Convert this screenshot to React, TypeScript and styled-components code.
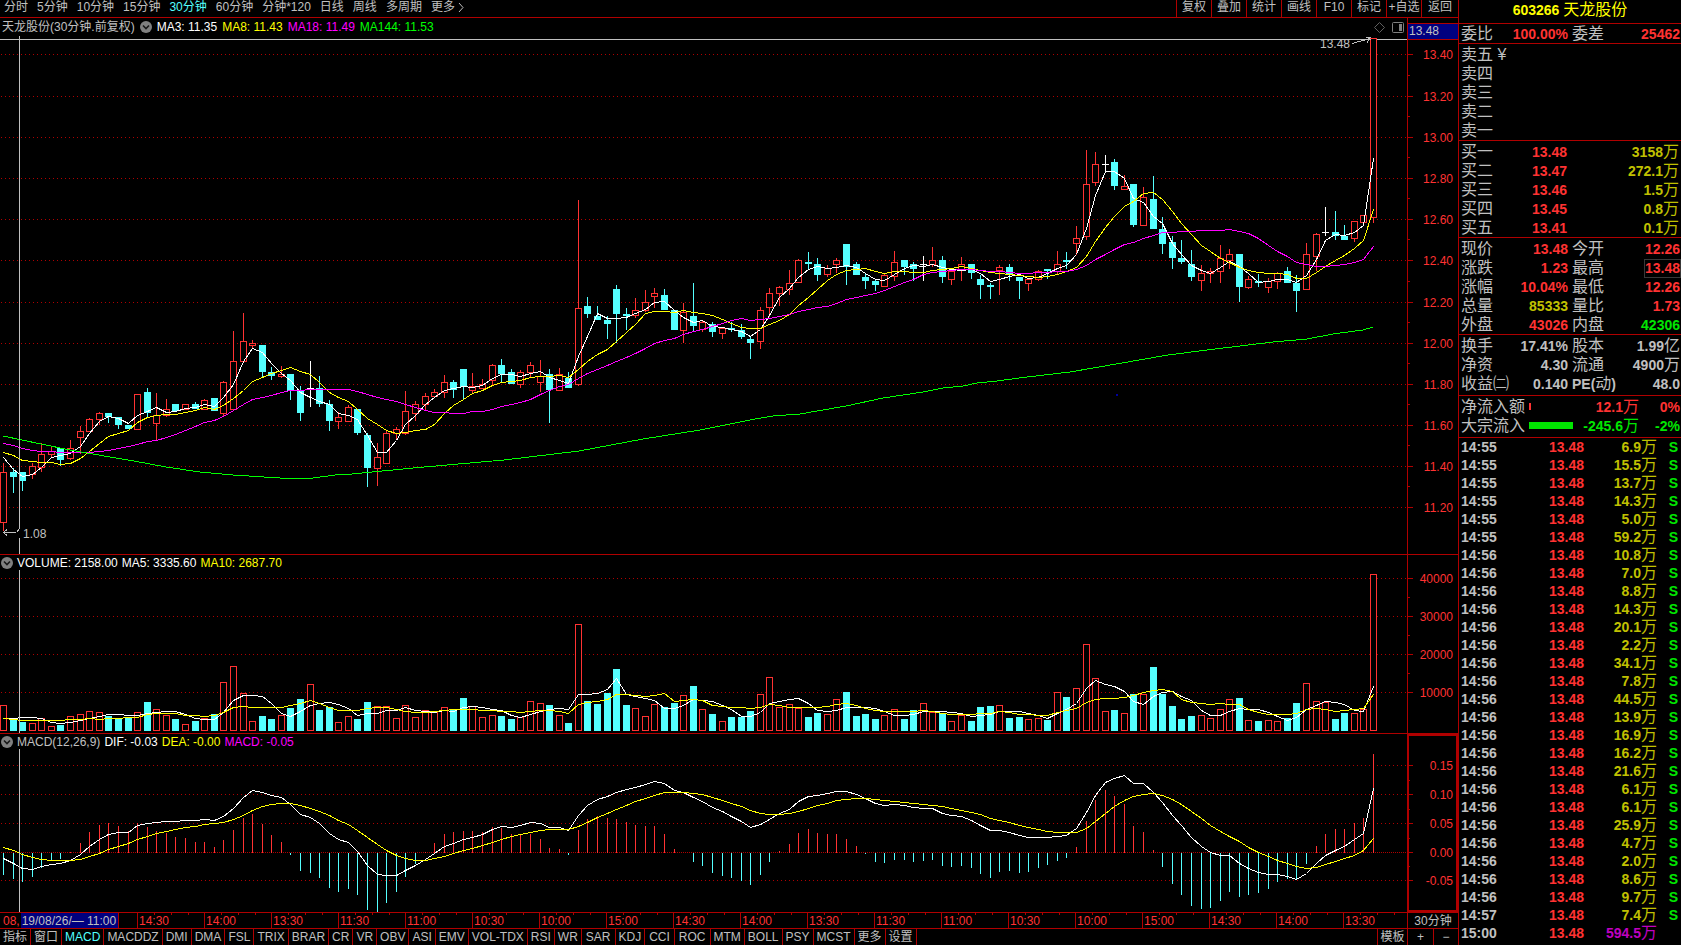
import React from "react";
import styled, { createGlobalStyle } from "styled-components";

const C = {
  line: "#b00000",
  red: "#ff3232",
  cyan: "#54ffff",
  grey: "#c0c0c0",
  white: "#ffffff",
  yellow: "#ffff00",
  dimYellow: "#c0c000",
  magenta: "#ff00ff",
  dimMagenta: "#c000c0",
  green: "#00e600",
  brightGreen: "#00ff00",
  navy: "#000080",
};

const Global = createGlobalStyle`
  * { box-sizing: border-box; }
  body {
    margin: 0;
    background: #000;
    color: ${C.grey};
    font: 12px/16px "Liberation Sans", "Noto Sans CJK SC", sans-serif;
    overflow: hidden;
  }
  button {
    font: inherit;
    color: inherit;
    background: none;
    border: 0;
    border-radius: 0;
    padding: 0;
    margin: 0;
    white-space: nowrap;
    cursor: pointer;
  }
  svg { display: block; }
`;

/* ---------- page frame ---------- */

const Page = styled.div`
  display: grid;
  grid-template-columns: minmax(0, 1fr) 222px;
  background: #000;
`;

const ChartColumn = styled.main`
  display: flex;
  flex-direction: column;
  min-width: 0;
  border-right: 1px solid ${C.line};
`;

/* ---------- top toolbar ---------- */

const Toolbar = styled.header`
  display: flex;
  justify-content: space-between;
  height: 18px;
  border-bottom: 1px solid ${C.line};
  line-height: 15px;
  overflow: hidden;
`;

const Periods = styled.nav`
  display: flex;
  gap: 9px;
  padding-left: 4px;
`;

const PeriodButton = styled.button<{ $active?: boolean }>`
  display: flex;
  align-items: center;
  gap: 2px;
  height: 15px;
  color: ${(p) => (p.$active ? C.cyan : C.grey)};
`;

const Tools = styled.div`
  display: flex;
`;

const ToolButton = styled.button`
  width: 35px;
  height: 17px;
  padding-bottom: 2px;
  line-height: 15px;
  border-left: 1px solid ${C.line};
  &:last-child { width: 37px; }
`;

/* ---------- chart panes ---------- */

const Pane = styled.section`
  display: grid;
  grid-template-columns: minmax(0, 1fr) 51px;
  border-bottom: 1px solid ${C.line};
`;

const Plot = styled.div`
  min-width: 0;
`;

const PaneHeader = styled.div<{ $main?: boolean }>`
  display: flex;
  align-items: center;
  gap: ${(p) => (p.$main ? 5 : 4)}px;
  height: ${(p) => (p.$main ? 18 : 15)}px;
  line-height: 16px;
  padding: 0 3px 0 ${(p) => (p.$main ? 2 : 1)}px;
  white-space: nowrap;
`;

const Legend = styled.span<{ $c: string }>`
  color: ${(p) => p.$c};
`;

const HeaderIcons = styled.span`
  display: flex;
  align-items: center;
  gap: 7px;
  margin-left: auto;
`;

const Canvas = styled.svg`
  width: 100%;
  shape-rendering: crispEdges;
`;

const Axis = styled.svg`
  shape-rendering: crispEdges;
  font-size: 12px;
`;

/* ---------- time axis and indicator tabs ---------- */

const TimeRow = styled.div`
  display: grid;
  grid-template-columns: minmax(0, 1fr) 51px;
  grid-template-rows: 15px;
  height: 16px;
  border-bottom: 1px solid ${C.line};
  line-height: 16px;
`;

const TimeScale = styled.div`
  display: grid;
  grid-template-columns: 137fr repeat(18, 67fr) 64fr;
  grid-template-rows: 15px;
  color: ${C.red};
  white-space: nowrap;
`;

const TimeCell = styled.div`
  min-width: 0;
  border-left: 1px solid ${C.line};
  padding-left: 1px;
  background: repeating-linear-gradient(90deg, transparent 0 16px, ${C.line} 16px 17px) 0 0 / 100% 2px no-repeat;
`;

const TimeLead = styled.div`
  display: flex;
  min-width: 0;
  padding-left: 3px;
`;

const CursorTime = styled.span`
  width: 98px;
  margin-left: 1px;
  padding-left: 1px;
  background: ${C.navy};
  color: ${C.grey};
  border-right: 1px solid ${C.line};
`;

const PeriodCell = styled.div`
  border-left: 1px solid ${C.line};
  text-align: center;
`;

const BottomBar = styled.footer`
  display: flex;
  justify-content: space-between;
  height: 16px;
  line-height: 16px;
`;

const Tabs = styled.nav`
  display: flex;
`;

const Tab = styled.button<{ $active?: boolean; $roomy?: boolean }>`
  height: 16px;
  padding: 0 ${(p) => (p.$roomy ? 4 : 3)}px;
  line-height: 16px;
  border-right: 1px solid ${C.line};
  color: ${(p) => (p.$active ? C.cyan : C.grey)};
`;

const CornerButton = styled.button<{ $w: number }>`
  width: ${(p) => p.$w}px;
  height: 16px;
  line-height: 16px;
  border-left: 1px solid ${C.line};
`;

/* ---------- quote panel ---------- */

const Panel = styled.aside`
  min-width: 0;
  font-size: 14px;
`;

const Title = styled.h1`
  margin: 0;
  height: 24px;
  border-bottom: 1px solid ${C.line};
  color: ${C.yellow};
  font-size: 14px;
  line-height: 20px;
  text-align: center;
  white-space: nowrap;
`;

const Wide = styled.span`
  font-size: 16px;
  font-weight: 400;
  line-height: 0;
`;

const Latin = styled.span`
  font-size: 14px;
  font-weight: 700;
  line-height: 0;
`;

const Block = styled.div<{ $top?: number; $bottom?: number }>`
  padding: ${(p) => p.$top ?? 1}px 1px ${(p) => p.$bottom ?? 0}px 2px;
  border-bottom: 1px solid ${C.line};
  &:last-child { border-bottom: 0; padding-top: 0; }
`;

const Table = styled.table<{ $row?: number }>`
  width: 100%;
  table-layout: fixed;
  border-collapse: collapse;
  th, td {
    height: ${(p) => p.$row ?? 19}px;
    line-height: ${(p) => (p.$row ?? 19) - 1}px;
    padding: 0;
    white-space: nowrap;
    vertical-align: top;
    overflow: visible;
  }
`;

const Label = styled.th<{ $inset?: boolean }>`
  && { padding: 1px 0 0 ${(p) => (p.$inset ? 4 : 0)}px; }
  font-size: 16px;
  font-weight: 400;
  text-align: left;
`;

const Value = styled.td<{ $c?: string; $left?: boolean; $inset?: number }>`
  && { padding: 1px ${(p) => p.$inset ?? 0}px 0 0; }
  color: ${(p) => p.$c ?? C.grey};
  font-weight: 700;
  text-align: ${(p) => (p.$left ? "left" : "right")};
`;

const Boxed = styled.span`
  display: inline-block;
  line-height: 17px;
  box-shadow: 0 0 0 1px #383838;
`;

const FlowBar = styled.div<{ $c: string }>`
  height: 7px;
  margin-top: 6px;
  background: ${(p) => p.$c};
`;

/* ---------- data ---------- */

/* kind, high, body top, body bottom, low, volume top; one entry per half hour, in plot rows */
const RAW = `
r 463 472 522 531 705|c 468 472 477 493 720|c 472 472 481 491 722|r 463 466 474 479 723|r 443 454 467 472 718|r 447 451 454 457 726
c 448 448 460 466 725|r 440 448 458 460 716|r 426 431 437 454 714|r 418 419 431 432 711|r 412 413 419 425 712|c 413 413 417 423 716
c 417 417 425 429 719|c 425 425 429 429 717|r 394 394 429 430 712|c 388 392 413 418 702|r 393 415 423 441 709|r 399 409 415 417 715
c 404 404 411 411 719|r 404 404 409 410 724|c 402 404 409 409 721|r 399 400 409 409 718|c 398 398 411 411 714|r 381 382 413 416 682
r 331 361 409 411 666|r 313 341 361 362 693|r 340 343 345 348 721|c 345 345 372 377 716|c 367 372 376 380 719|r 366 374 376 378 715
c 374 374 391 400 708|c 386 391 413 421 699|w 361 388 388 407 684|c 376 388 404 407 710|c 400 404 421 431 707|r 412 417 421 429 722
r 405 407 421 421 716|c 409 409 433 435 719|c 433 435 468 487 702|r 443 457 468 486 706|r 430 433 463 464 706|r 427 429 433 440 718
r 391 411 433 435 705|r 401 404 413 421 717|r 393 396 404 411 710|r 389 392 396 398 712|r 375 382 392 398 707|c 380 382 390 398 709
c 369 369 387 400 698|r 373 386 390 393 706|r 379 384 388 389 717|r 364 365 380 385 715|c 359 365 374 382 716|c 369 372 384 384 719
r 370 372 384 388 717|r 362 365 372 377 701|r 360 376 382 392 703|c 369 374 390 423 705|r 368 374 390 390 715|c 372 378 388 388 723
r 200 308 384 386 624|c 297 306 314 318 701|c 306 316 320 320 704|c 316 320 324 339 693|c 285 289 314 343 669|c 308 314 316 330 705
r 298 310 315 318 708|r 290 302 310 312 716|r 288 293 296 308 704|c 289 295 310 310 707|c 310 310 330 330 703|r 303 312 330 343 695
c 283 316 326 332 686|r 321 322 329 332 709|c 322 324 332 337 714|r 327 328 333 339 721|c 322 328 330 332 717|c 324 330 337 339 717
c 337 339 343 359 711|r 307 310 341 349 694|r 288 293 307 317 677|r 286 287 293 306 707|r 270 283 289 295 704|r 259 260 282 283 708
c 252 262 264 270 717|c 258 264 275 281 713|r 265 268 274 277 714|r 258 260 264 273 699|c 244 244 267 285 692|c 262 264 275 275 716
c 274 277 281 289 714|c 280 281 285 291 719|r 274 275 286 287 715|r 251 262 276 281 709|c 260 260 267 275 719|c 262 264 269 281 710
w 256 264 264 281 703|r 247 260 264 267 712|c 256 260 277 283 713|r 270 271 279 285 721|r 257 264 270 281 715|c 264 264 273 279 721
c 275 279 285 299 707|c 283 285 287 299 706|r 265 267 270 295 705|c 264 267 275 281 718|c 277 277 281 299 717|r 278 279 283 291 719
r 270 271 279 281 718|c 269 269 271 279 720|r 251 264 271 275 692|c 252 260 262 269 697|r 226 238 243 255 688|r 150 184 236 240 644
r 152 164 182 186 678|w 155 164 164 171 711|c 159 162 186 190 710|r 175 186 189 190 713|c 184 184 225 227 694|r 187 197 225 225 694
c 176 199 229 229 667|c 217 229 244 254 694|c 236 242 258 269 706|c 240 258 262 264 719|c 250 264 277 281 716|r 265 273 280 291 715
r 268 271 273 283 718|r 245 258 271 283 709|r 249 254 260 269 699|c 254 254 287 302 698|r 276 279 287 289 720|c 274 281 283 287 721
r 278 281 287 293 720|r 272 273 281 289 721|c 267 271 283 283 718|c 275 283 291 312 703|r 243 254 289 289 683|r 233 234 256 271 701
w 207 232 232 236 702|c 211 232 236 240 719|c 225 236 240 240 713|r 221 221 238 242 713|r 215 215 222 226 709|r 38 38 217 223 574`;

type Bar = { kind: string; high: number; top: number; bottom: number; low: number; vol: number; x: number; close: number };

const BARS: Bar[] = RAW.trim()
  .split(/[|\n]/)
  .map((entry, i) => {
    const [kind, ...nums] = entry.trim().split(" ");
    const [high, top, bottom, low, vol] = nums.map(Number);
    return { kind, high, top, bottom, low, vol, x: 3 + Math.round((i * 1370) / 143), close: kind === "c" ? bottom - 1 : top };
  });

const average = (values: number[], span: number, lead: number[]) =>
  values.map((_, i) =>
    i < lead.length ? lead[i] : values.slice(i - span + 1, i + 1).reduce((a, b) => a + b, 0) / span
  );

const closes = BARS.map((b) => b.close);
const volumes = BARS.map((b) => b.vol);
const MA3 = average(closes, 3, [457, 469]);
const MA8 = average(closes, 8, [452, 455, 460, 461, 462, 462, 464]);
const MA18 = average(closes, 18, [443, 445, 448, 450, 451, 451, 452, 452, 452, 452, 451, 450, 448, 446, 444, 441, 440]);
const VOL5 = average(volumes, 5, [718, 718, 717, 717]);
const VOL10 = average(volumes, 10, [718, 719, 720, 720, 720, 720, 720, 719, 719]);
const MA144 =
  "3,436 41,444 70,450 110,457 134,461 166,467 200,472 233,475 264,477 280,478 313,478 335,475 352,474 413,468 504,460 579,451 643,439 700,430 755,419 773,416 800,414 846,406 883,398 923,392 943,388 963,386 977,383 997,381 1027,377 1070,372 1145,359 1168,355 1215,349 1240,346 1273,342 1307,339 1333,334 1363,330 1373,327";

const price = (row: number) => Math.round((13.4 - (row - 54) / 205.9) * 100) / 100;

const MACD = (() => {
  let slow = 11.486;
  let fast = slow - 0.01;
  let dea = 0.0086;
  return closes.map((row, i) => {
    if (i > 0) {
      const p = price(row);
      fast += (2 / 13) * (p - fast);
      slow += (2 / 27) * (p - slow);
      dea += 0.2 * (fast - slow - dea);
    }
    const dif = fast - slow;
    return { dif, dea, bar: 2 * (dif - dea) };
  });
})();

const macdRow = (v: number) => 852 - v * 580;

const polyline = (rows: number[]) => rows.map((y, i) => `${BARS[i].x + 0.5},${Math.round(y) + 0.5}`).join(" ");

const PERIODS = ["分时", "5分钟", "10分钟", "15分钟", "30分钟", "60分钟", "分钟*120", "日线", "周线", "多周期"];
const TOOLS = ["复权", "叠加", "统计", "画线", "F10", "标记", "+自选", "返回"];
const TIMES = ["14:30", "14:00", "13:30", "11:30", "11:00", "10:30", "10:00", "15:00", "14:30", "14:00", "13:30", "11:30", "11:00", "10:30", "10:00", "15:00", "14:30", "14:00", "13:30"];
const TABS = ["指标", "窗口", "MACD", "MACDDZ", "DMI", "DMA", "FSL", "TRIX", "BRAR", "CR", "VR", "OBV", "ASI", "EMV", "VOL-TDX", "RSI", "WR", "SAR", "KDJ", "CCI", "ROC", "MTM", "BOLL", "PSY", "MCST", "更多", "设置"];
const ROOMY_TABS = ["SAR", "CCI", "ROC"];

const PRICE_TICKS = [54, 96, 137, 178, 219, 260, 302, 343, 384, 425, 466, 507];
const VOLUME_TICKS = [578, 616, 654, 692];
const MACD_TICKS = [765, 794, 823, 852, 880];

const BIDS = [
  ["买一", "13.48", "3158"],
  ["买二", "13.47", "272.1"],
  ["买三", "13.46", "1.5"],
  ["买四", "13.45", "0.8"],
  ["买五", "13.41", "0.1"],
];

const STATS: [string, string, string, string, string, string][] = [
  ["现价", "13.48", C.red, "今开", "12.26", C.red],
  ["涨跌", "1.23", C.red, "最高", "13.48", C.red],
  ["涨幅", "10.04%", C.red, "最低", "12.26", C.red],
  ["总量", "85333", C.dimYellow, "量比", "1.73", C.red],
  ["外盘", "43026", C.red, "内盘", "42306", C.green],
];

const TRADES = [
  "14:55 6.9", "14:55 15.5", "14:55 13.7", "14:55 14.3", "14:55 5.0", "14:55 59.2",
  "14:56 10.8", "14:56 7.0", "14:56 8.8", "14:56 14.3", "14:56 20.1", "14:56 2.2", "14:56 34.1",
  "14:56 7.8", "14:56 44.5", "14:56 13.9", "14:56 16.9", "14:56 16.2", "14:56 21.6", "14:56 6.1",
  "14:56 6.1", "14:56 25.9", "14:56 4.7", "14:56 2.0", "14:56 8.6", "14:56 9.7", "14:57 7.4", "15:00 594.5",
].map((t) => t.split(" "));

/* ---------- drawing parts ---------- */

const Toggle = () => (
  <svg width="12" height="12" viewBox="0 0 12 12" aria-hidden="true">
    <circle cx="6" cy="6" r="6" fill="#808080" />
    <path d="M3 4.5 6 7.5 9 4.5" fill="none" stroke="#181818" strokeWidth="1.6" />
  </svg>
);

const Grid = ({ rows, zero }: { rows: number[]; zero?: number }) => (
  <g stroke={C.line}>
    {rows.map((y) => (
      <line key={y} x1="1" x2="1407" y1={y + 0.5} y2={y + 0.5} strokeDasharray={y === zero ? "1 1" : "1 3"} />
    ))}
  </g>
);

const Curve = ({ points, color }: { points: string; color: string }) => (
  <polyline points={points} fill="none" stroke={color} />
);

const Candle = ({ b }: { b: Bar }) => {
  const cx = b.x + 0.5;
  if (b.kind === "w")
    return <path d={`M${cx} ${b.high}V${b.low}M${b.x - 3} ${b.top + 0.5}h7`} stroke={C.white} fill="none" />;
  if (b.kind === "c")
    return (
      <g>
        <line x1={cx} x2={cx} y1={b.high} y2={b.low} stroke={C.cyan} />
        <rect x={b.x - 3} y={b.top} width="7" height={b.bottom - b.top} fill={C.cyan} />
      </g>
    );
  return (
    <g stroke={C.red}>
      <line x1={cx} x2={cx} y1={b.high} y2={b.low} />
      <rect x={b.x - 2.5} y={b.top + 0.5} width="6" height={b.bottom - b.top} fill="#000" />
    </g>
  );
};

const VolumeBar = ({ b }: { b: Bar }) =>
  b.kind === "c" ? (
    <rect x={b.x - 3} y={b.vol} width="7" height={731 - b.vol} fill={C.cyan} />
  ) : (
    <rect x={b.x - 2.5} y={b.vol + 0.5} width="6" height={730 - b.vol} fill="#000" stroke={C.red} />
  );

const Scale = ({ top, height, ticks, minor, labels, children }: {
  top: number; height: number; ticks: number[]; minor: number; labels: string[]; children?: React.ReactNode;
}) => (
  <Axis width="51" height={height} viewBox={`0 ${top} 51 ${height}`}>
    <g stroke={C.line}>
      <line x1="0.5" x2="0.5" y1={top} y2={top + height} />
      {ticks.map((y) => <line key={y} x1="0" x2="6" y1={y + 0.5} y2={y + 0.5} />)}
      {ticks.slice(1).map((y) => <line key={y} x1="0" x2="3" y1={y - minor + 0.5} y2={y - minor + 0.5} />)}
    </g>
    <g fill={C.red} textAnchor="end">
      {ticks.map((y, i) => <text key={y} x="46" y={y + 5}>{labels[i]}</text>)}
    </g>
    {children}
  </Axis>
);

const Wan = () => <Wide>万</Wide>;

/* ---------- page ---------- */

export default function App() {
  return (
    <>
      <Global />
      <Page>
        <ChartColumn>
          <Toolbar>
            <Periods>
              {PERIODS.map((p) => <PeriodButton key={p} $active={p === "30分钟"}>{p}</PeriodButton>)}
              <PeriodButton>
                更多
                <svg width="8" height="11" viewBox="0 0 8 11" aria-hidden="true">
                  <path d="M2 1 6 5.5 2 10" fill="none" stroke={C.grey} />
                </svg>
              </PeriodButton>
            </Periods>
            <Tools>{TOOLS.map((t) => <ToolButton key={t}>{t}</ToolButton>)}</Tools>
          </Toolbar>

          <Pane>
            <Plot>
              <PaneHeader $main>
                <span>天龙股份(30分钟.前复权)</span>
                <Toggle />
                <Legend $c={C.white}>MA3: 11.35</Legend>
                <Legend $c={C.yellow}>MA8: 11.43</Legend>
                <Legend $c={C.magenta}>MA18: 11.49</Legend>
                <Legend $c={C.brightGreen}>MA144: 11.53</Legend>
                <HeaderIcons>
                  <svg width="11" height="11" viewBox="0 0 11 11" aria-hidden="true">
                    <path d="M5.5 .5 10.5 5.5 5.5 10.5 .5 5.5Z" fill="none" stroke="#606060" />
                  </svg>
                  <svg width="12" height="11" viewBox="0 0 12 11" aria-hidden="true">
                    <rect x=".5" y=".5" width="11" height="10" rx="1" fill="none" stroke="#808080" />
                    <rect x="7" y="2" width="3" height="7" fill="#808080" />
                  </svg>
                </HeaderIcons>
              </PaneHeader>
              <Canvas height="518" viewBox="0 36 1407 518" preserveAspectRatio="none">
                <Grid rows={PRICE_TICKS} />
                <rect x="1116" y="394" width="2" height="2" fill="#0000a0" />
                {BARS.map((b) => <Candle key={b.x} b={b} />)}
                <Curve points={polyline(MA3)} color={C.white} />
                <Curve points={polyline(MA8)} color={C.yellow} />
                <Curve points={polyline(MA18)} color={C.magenta} />
                <Curve points={MA144} color={C.brightGreen} />
                <path d="M19.5 36V529M19.5 538V554M0 39.5H1371" stroke={C.grey} fill="none" />
                <path d="M1377 39.5H1407" stroke={C.grey} />
                <path d="M1352 43.5 1370 38.5M1366 37.5H1370.5L1367 42.5" stroke={C.grey} fill="none" />
                <path d="M4 532.5H16M7 529.5 3.5 532.5 7 535.5M17 531.5l2 -2" stroke={C.grey} fill="none" />
                <g fill={C.grey} fontSize="12">
                  <text x="1320" y="48">13.48</text>
                  <text x="23" y="538">1.08</text>
                </g>
              </Canvas>
            </Plot>
            <Scale
              top={18}
              height={536}
              ticks={PRICE_TICKS}
              minor={21}
              labels={["13.40", "13.20", "13.00", "12.80", "12.60", "12.40", "12.20", "12.00", "11.80", "11.60", "11.40", "11.20"]}
            >
              <rect x="1" y="24" width="50" height="15" fill={C.navy} />
              <path d="M0 23.5H51M0 39.5H51" stroke={C.line} />
              <text x="2" y="35" fill={C.grey}>13.48</text>
            </Scale>
          </Pane>

          <Pane>
            <Plot>
              <PaneHeader>
                <Toggle />
                <Legend $c={C.white}>VOLUME: 2158.00</Legend>
                <Legend $c={C.white}>MA5: 3335.60</Legend>
                <Legend $c={C.yellow}>MA10: 2687.70</Legend>
              </PaneHeader>
              <Canvas height="163" viewBox="0 570 1407 163" preserveAspectRatio="none">
                <Grid rows={VOLUME_TICKS} />
                {BARS.map((b) => <VolumeBar key={b.x} b={b} />)}
                <Curve points={polyline(VOL5)} color={C.white} />
                <Curve points={polyline(VOL10)} color={C.yellow} />
                <line x1="19.5" x2="19.5" y1="570" y2="733" stroke={C.grey} />
              </Canvas>
            </Plot>
            <Scale top={555} height={178} ticks={VOLUME_TICKS} minor={19} labels={["40000", "30000", "20000", "10000"]} />
          </Pane>

          <Pane>
            <Plot>
              <PaneHeader>
                <Toggle />
                <span>MACD(12,26,9)</span>
                <Legend $c={C.white}>DIF: -0.03</Legend>
                <Legend $c={C.yellow}>DEA: -0.00</Legend>
                <Legend $c={C.magenta}>MACD: -0.05</Legend>
              </PaneHeader>
              <Canvas height="163" viewBox="0 749 1407 163" preserveAspectRatio="none">
                <Grid rows={MACD_TICKS} zero={852} />
                {MACD.map((m, i) => (
                  <line
                    key={i}
                    x1={BARS[i].x + 0.5}
                    x2={BARS[i].x + 0.5}
                    y1="852.5"
                    y2={Math.round(macdRow(m.bar)) + 0.5}
                    stroke={m.bar > 0 ? C.red : C.cyan}
                  />
                ))}
                <Curve points={polyline(MACD.map((m) => macdRow(m.dif)))} color={C.white} />
                <Curve points={polyline(MACD.map((m) => macdRow(m.dea)))} color={C.yellow} />
                <line x1="19.5" x2="19.5" y1="749" y2="912" stroke={C.grey} />
              </Canvas>
            </Plot>
            <Scale top={734} height={178} ticks={MACD_TICKS} minor={14} labels={["0.15", "0.10", "0.05", "0.00", "-0.05"]}>
              <rect x="1" y="735" width="49" height="176" fill="none" stroke={C.line} strokeWidth="2" />
            </Scale>
          </Pane>

          <TimeRow>
            <TimeScale>
              <TimeLead>
                08,
                <CursorTime>19/08/26/— 11:00</CursorTime>
              </TimeLead>
              {TIMES.map((t, i) => <TimeCell key={i}>{t}</TimeCell>)}
            </TimeScale>
            <PeriodCell>30分钟</PeriodCell>
          </TimeRow>

          <BottomBar>
            <Tabs>
              {TABS.map((t) => (
                <Tab key={t} $active={t === "MACD"} $roomy={ROOMY_TABS.includes(t)}>{t}</Tab>
              ))}
            </Tabs>
            <Tools>
              <CornerButton $w={30}>模板</CornerButton>
              <CornerButton $w={26}>+</CornerButton>
              <CornerButton $w={25}>−</CornerButton>
            </Tools>
          </BottomBar>
        </ChartColumn>

        <Panel>
          <Title>603266 <Wide>天龙股份</Wide></Title>
          <Block $top={0}>
            <Table>
              <colgroup><col width="50" /><col width="57" /><col width="50" /><col /></colgroup>
              <tbody>
                <tr>
                  <Label>委比</Label><Value $c={C.red}>100.00%</Value>
                  <Label $inset>委差</Label><Value $c={C.red}>25462</Value>
                </tr>
              </tbody>
            </Table>
          </Block>
          <Block>
            <Table>
              <tbody>
                {["卖五", "卖四", "卖三", "卖二", "卖一"].map((s) => (
                  <tr key={s}><Label>{s}{s === "卖五" && " ¥"}</Label></tr>
                ))}
              </tbody>
            </Table>
          </Block>
          <Block>
            <Table>
              <colgroup><col width="50" /><col width="57" /><col /></colgroup>
              <tbody>
                {BIDS.map(([name, p, v]) => (
                  <tr key={name}>
                    <Label>{name}</Label>
                    <Value $c={C.red} $inset={1}>{p}</Value>
                    <Value $c={C.dimYellow} $inset={1}>{v}<Wan /></Value>
                  </tr>
                ))}
              </tbody>
            </Table>
          </Block>
          <Block>
            <Table>
              <colgroup><col width="50" /><col width="57" /><col width="50" /><col /></colgroup>
              <tbody>
                {STATS.map(([a, av, ac, b, bv, bc]) => (
                  <tr key={a}>
                    <Label>{a}</Label><Value $c={ac}>{av}</Value>
                    <Label $inset>{b}</Label>
                    <Value $c={bc}>{b === "最高" ? <Boxed>{bv}</Boxed> : bv}</Value>
                  </tr>
                ))}
              </tbody>
            </Table>
          </Block>
          <Block $bottom={2}>
            <Table>
              <colgroup><col width="50" /><col width="57" /><col width="50" /><col /></colgroup>
              <tbody>
                <tr>
                  <Label>换手</Label><Value>17.41%</Value>
                  <Label $inset>股本</Label><Value>1.99<Wide>亿</Wide></Value>
                </tr>
                <tr>
                  <Label>净资</Label><Value>4.30</Value>
                  <Label $inset>流通</Label><Value>4900<Wan /></Value>
                </tr>
                <tr>
                  <Label>收益㈡</Label><Value>0.140</Value>
                  <Label $inset><Latin>PE(</Latin>动<Latin>)</Latin></Label><Value>48.0</Value>
                </tr>
              </tbody>
            </Table>
          </Block>
          <Block $bottom={2}>
            <Table>
              <colgroup><col width="68" /><col width="2" /><col width="42" /><col width="66" /><col /></colgroup>
              <tbody>
                <tr>
                  <Label>净流入额</Label>
                  <td><FlowBar $c={C.red} /></td>
                  <td />
                  <Value $c={C.red}>12.1<Wan /></Value>
                  <Value $c={C.red}>0%</Value>
                </tr>
                <tr>
                  <Label>大宗流入</Label>
                  <td colSpan={2}><FlowBar $c={C.green} /></td>
                  <Value $c={C.green}>-245.6<Wan /></Value>
                  <Value $c={C.green}>-2%</Value>
                </tr>
              </tbody>
            </Table>
          </Block>
          <Block>
            <Table $row={18}>
              <colgroup><col width="50" /><col width="73" /><col width="73" /><col /></colgroup>
              <tbody>
                {TRADES.map(([time, v], i) => {
                  const closing = time === "15:00";
                  return (
                    <tr key={i}>
                      <Value $left>{time}</Value>
                      <Value $c={C.red}>13.48</Value>
                      <Value $c={closing ? C.dimMagenta : C.dimYellow}>{v}<Wan /></Value>
                      <Value $c={C.green} $inset={2}>{closing ? "" : "S"}</Value>
                    </tr>
                  );
                })}
              </tbody>
            </Table>
          </Block>
        </Panel>
      </Page>
    </>
  );
}
